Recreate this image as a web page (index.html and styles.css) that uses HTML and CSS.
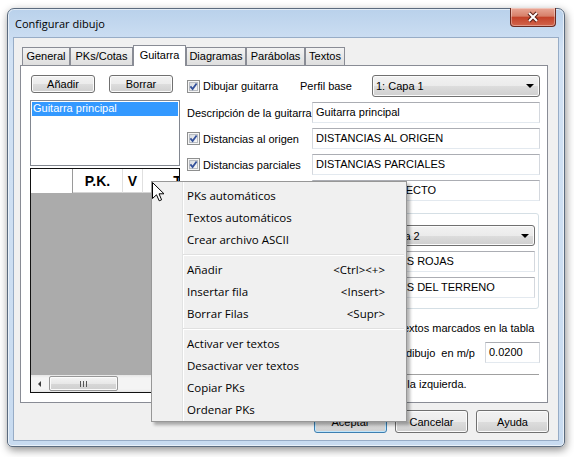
FILE: index.html
```html
<!DOCTYPE html>
<html lang="es">
<head>
    <meta charset="UTF-8">
    <title>Configurar dibujo</title>
    <link rel="stylesheet" href="styles.css">
</head>
<body>
    <svg class="defs" width="0" height="0">
        <defs>
            <linearGradient id="chkFill" x1="0" y1="0" x2="1" y2="1">
                <stop offset="0" stop-color="#d4d8dd"/>
                <stop offset="1" stop-color="#fbfbfb"/>
            </linearGradient>
            <symbol id="checked" viewBox="0 0 13 13">
                <rect x="0.5" y="0.5" width="12" height="12" fill="#f5f5f5" stroke="#8e8f8f"/>
                <rect x="2.5" y="2.5" width="8" height="8" fill="url(#chkFill)" stroke="#b8bcc2"/>
                <path d="M3.4 6.4 L5.6 9 L9.6 3.4" fill="none" stroke="#33509a" stroke-width="1.8"/>
            </symbol>
        </defs>
    </svg>

    <div class="window">
        <div class="titlebar">
            <span class="title">Configurar dibujo</span>
            <span class="close-btn">
                <svg width="14" height="12" viewBox="0 0 14 12">
                    <path d="M3 2 L11 10 M11 2 L3 10" stroke="#5a2018" stroke-width="4"/>
                    <path d="M3 2 L11 10 M11 2 L3 10" stroke="#fff" stroke-width="2"/>
                </svg>
            </span>
        </div>

        <div class="client">
            <div class="tabs">
                <div class="tab tab-general">General</div>
                <div class="tab tab-pks">PKs/Cotas</div>
                <div class="tab tab-guitarra active">Guitarra</div>
                <div class="tab tab-diagramas">Diagramas</div>
                <div class="tab tab-parabolas">Parábolas</div>
                <div class="tab tab-textos">Textos</div>
            </div>

            <div class="panel">
                <div class="left-col">
                    <div class="btn-row">
                        <button class="btn btn-add">Añadir</button>
                        <button class="btn btn-del">Borrar</button>
                    </div>
                    <div class="listbox">
                        <div class="list-item selected">Guitarra principal</div>
                    </div>
                    <div class="grid">
                        <div class="grid-head">
                            <div class="corner"></div>
                            <div class="hcell col-pk">P.K.</div>
                            <div class="hcell col-v">V</div>
                            <div class="hcell col-t">T</div>
                        </div>
                        <div class="grid-body"></div>
                        <div class="hscroll">
                            <span class="sb-arrow"><span class="tri-left"></span></span>
                            <span class="sb-thumb"><span class="grip"></span></span>
                        </div>
                    </div>
                </div>

                <div class="right-col">
                    <div class="row first">
                        <svg class="chk"><use href="#checked"/></svg>
                        <span>Dibujar guitarra</span>
                        <span class="perfil-label">Perfil base</span>
                        <div class="combo combo-base"><span>1: Capa 1</span><span class="arrow"></span></div>
                    </div>
                    <div class="row">
                        <span class="plain-label">Descripción de la guitarra</span>
                        <div class="field">Guitarra principal</div>
                    </div>
                    <div class="row">
                        <svg class="chk"><use href="#checked"/></svg>
                        <span>Distancias al origen</span>
                        <div class="field">DISTANCIAS AL ORIGEN</div>
                    </div>
                    <div class="row">
                        <svg class="chk"><use href="#checked"/></svg>
                        <span>Distancias parciales</span>
                        <div class="field">DISTANCIAS PARCIALES</div>
                    </div>
                    <div class="row">
                        <svg class="chk"><use href="#checked"/></svg>
                        <span>Cotas de proyecto</span>
                        <div class="field">COTAS DE PROYECTO</div>
                    </div>

                    <div class="group">
                        <div class="g-row">
                            <span>Perfil de comparación</span>
                            <div class="combo combo-group"><span>2: Capa 2</span><span class="arrow"></span></div>
                        </div>
                        <div class="g-row">
                            <svg class="chk"><use href="#checked"/></svg>
                            <span>Cotas rojas</span>
                            <div class="field field-group">COTAS ROJAS</div>
                        </div>
                        <div class="g-row">
                            <svg class="chk"><use href="#checked"/></svg>
                            <span>Cotas del terreno</span>
                            <div class="field field-group">COTAS DEL TERRENO</div>
                        </div>
                    </div>

                    <div class="row row-text">
                        <svg class="chk"><use href="#checked"/></svg>
                        <span>Mostrar en esta guitarra únicamente los textos marcados en la tabla</span>
                    </div>
                    <div class="row row-scale">
                        <span class="scale-label">Escala horizontal del dibujo&nbsp; en m/p</span>
                        <div class="field field-scale">0.0200</div>
                    </div>
                    <div class="separator"></div>
                    <div class="note">Nota: los PKs de esta guitarra se alinearán a la izquierda.</div>
                </div>
            </div>

            <div class="btn-bar">
                <button class="btn btn-big default">Aceptar</button>
                <button class="btn btn-big">Cancelar</button>
                <button class="btn btn-big">Ayuda</button>
            </div>
        </div>
    </div>

    <div class="ctx-menu">
        <div class="mi">PKs automáticos</div>
        <div class="mi">Textos automáticos</div>
        <div class="mi">Crear archivo ASCII</div>
        <div class="msep"></div>
        <div class="mi">Añadir<span class="shortcut">&lt;Ctrl&gt;&lt;+&gt;</span></div>
        <div class="mi">Insertar fila<span class="shortcut">&lt;Insert&gt;</span></div>
        <div class="mi">Borrar Filas<span class="shortcut">&lt;Supr&gt;</span></div>
        <div class="msep"></div>
        <div class="mi">Activar ver textos</div>
        <div class="mi">Desactivar ver textos</div>
        <div class="mi">Copiar PKs</div>
        <div class="mi">Ordenar PKs</div>
    </div>

    <svg class="cursor" width="13" height="20" viewBox="0 0 13 20">
        <path d="M0.5 0.5 L0.5 16.5 L4.5 12.8 L7.2 18.8 L9.6 17.8 L7 11.8 L12 11.8 Z" fill="#fff" stroke="#000" stroke-linejoin="round"/>
    </svg>
</body>
</html>
```

FILE: styles.css
```css
* {
    box-sizing: border-box;
}
body {
    margin: 0;
    height: 457px;
    overflow: hidden;
    background-color: #fff;
    color: #000;
    font-family: "Liberation Sans", Arial, sans-serif;
    font-size: 11px;
    position: relative;
}
.defs {
    position: absolute;
}

/* window frame */
.window {
    margin: 8px 0 0 7px;
    width: 558px;
    height: 439px;
    border: 1px solid #5b6b7e;
    border-radius: 7px 7px 5px 5px;
    background: linear-gradient(#b9d1eb, #d2e2f4 40px, #c8dbf0 100%);
    box-shadow: 1px 3px 9px rgba(0, 0, 0, 0.45), inset 0 0 0 1px rgba(255, 255, 255, 0.6);
    padding: 0 5px 5px 5px;
    display: flex;
    flex-direction: column;
}
.titlebar {
    height: 28px;
    display: flex;
    align-items: center;
}
.title {
    font-family: "Open Sans", sans-serif;
    font-size: 11px;
    margin-left: 2px;
}
.close-btn {
    align-self: flex-start;
    margin: -1px 3px 0 auto;
    width: 46px;
    height: 19px;
    border: 1px solid #6b2a20;
    border-top: none;
    border-radius: 0 0 4px 4px;
    background: linear-gradient(#e9a897, #d7806a 45%, #c4432a 52%, #d2654c 100%);
    box-shadow: inset 0 0 0 1px rgba(255, 255, 255, 0.35);
    display: flex;
    align-items: center;
    justify-content: center;
}
.client {
    flex: 1;
    border: 1px solid #97acc6;
    background-color: #f0f0f0;
    padding: 7px 0 0 6px;
}

/* tabs */
.tabs {
    display: flex;
    align-items: flex-end;
    height: 20px;
    padding-left: 2px;
}
.tab {
    height: 18px;
    line-height: 17px;
    text-align: center;
    border: 1px solid #898c95;
    border-bottom: none;
    background: linear-gradient(#f3f3f3, #e8e8e8 50%, #dedede);
}
.tab.active {
    height: 21px;
    line-height: 18px;
    margin-bottom: -1px;
    background: #fff;
    position: relative;
    z-index: 1;
}
.tab-general { width: 48px; }
.tab-pks { width: 63px; }
.tab-guitarra { width: 53px; }
.tab-diagramas { width: 60px; }
.tab-parabolas { width: 59px; }
.tab-textos { width: 40px; }

.panel {
    width: 528px;
    height: 338px;
    border: 1px solid #898c95;
    background-color: #fff;
    padding: 9px 6px 0 9px;
    display: flex;
    gap: 6px;
}

/* buttons */
.btn {
    font: inherit;
    color: #000;
    padding: 0;
    border: 1px solid #707070;
    border-radius: 3px;
    background: linear-gradient(#f2f2f2, #ebebeb 50%, #dddddd 51%, #cfcfcf);
    box-shadow: inset 0 0 0 1px #fbfbfb;
}
.btn-row {
    display: flex;
    height: 18px;
}
.btn-add {
    width: 64px;
    margin-left: 1px;
}
.btn-del {
    width: 64px;
    margin-left: 14px;
}
.btn-bar {
    display: flex;
    justify-content: flex-end;
    gap: 8px;
    margin-top: 7px;
    padding-right: 9px;
}
.btn-big {
    width: 73px;
    height: 23px;
}
.btn-big.default {
    border-color: #3c7fb1;
    box-shadow: inset 0 0 0 1px #bfe5fb;
}

/* left column */
.left-col {
    width: 150px;
    display: flex;
    flex-direction: column;
}
.listbox {
    margin-top: 7px;
    height: 66px;
    border: 1px solid #828790;
    padding: 1px;
}
.list-item {
    height: 14px;
    line-height: 13px;
    padding-left: 1px;
}
.list-item.selected {
    background-color: #3399ff;
    color: #fff;
}
.grid {
    margin-top: 2px;
    height: 225px;
    border: 1px solid #111;
    display: flex;
    flex-direction: column;
    overflow: hidden;
}
.grid-head {
    display: flex;
    height: 24px;
    flex-shrink: 0;
    background-color: #fff;
}
.corner {
    width: 42px;
    flex-shrink: 0;
    border-right: 1px solid #9a9a9a;
}
.hcell {
    flex-shrink: 0;
    border-right: 1px solid #e0e0e0;
    border-bottom: 1px solid #d4d4d4;
    font-size: 14px;
    font-weight: bold;
    text-align: center;
    padding-top: 4px;
}
.col-pk { width: 50px; }
.col-v { width: 20px; }
.col-t { width: 70px; }
.grid-body {
    flex: 1;
    background-color: #ababab;
}
.hscroll {
    height: 17px;
    flex-shrink: 0;
    display: flex;
    align-items: center;
    background: linear-gradient(#e6e6e6, #f4f4f4 3px, #f4f4f4 14px, #e6e6e6);
}
.sb-arrow {
    width: 17px;
    display: flex;
    justify-content: center;
}
.tri-left {
    width: 0;
    height: 0;
    border-top: 3px solid transparent;
    border-bottom: 3px solid transparent;
    border-right: 3px solid #3a3a3a;
}
.sb-thumb {
    margin-left: 1px;
    width: 69px;
    height: 15px;
    border: 1px solid #979797;
    border-radius: 2px;
    background: linear-gradient(#f4f4f4, #e8e8e8 50%, #d8d8d8 51%, #cfcfcf);
    box-shadow: inset 0 0 0 1px #fafafa;
    display: flex;
    align-items: center;
    justify-content: center;
}
.grip {
    width: 7px;
    height: 6px;
    background: linear-gradient(to right, #555 1px, transparent 1px);
    background-size: 3px 100%;
}

/* right column */
.right-col {
    width: 354px;
    display: flex;
    flex-direction: column;
}
.row {
    display: flex;
    align-items: center;
    height: 21px;
    margin-top: 5px;
    white-space: nowrap;
}
.row.first {
    height: 22px;
    margin-top: 0;
}
.chk {
    width: 13px;
    height: 13px;
    flex-shrink: 0;
    margin: 0 3px 0 1px;
}
.plain-label {
    margin-left: 1px;
}
.perfil-label {
    margin: 0 20px 0 auto;
}
.field {
    margin-left: auto;
    width: 228px;
    height: 21px;
    line-height: 19px;
    padding: 0 3px;
    border: 1px solid;
    border-color: #abadb3 #d4d8de #e3e9ef #d4d8de;
    background-color: #fff;
    white-space: nowrap;
    overflow: hidden;
}
.combo {
    display: flex;
    align-items: center;
    height: 22px;
    padding-left: 3px;
    border: 1px solid #707070;
    border-radius: 3px;
    background: linear-gradient(#f2f2f2, #ebebeb 50%, #dddddd 51%, #cfcfcf);
    box-shadow: inset 0 0 0 1px #fbfbfb;
}
.combo-base {
    width: 168px;
}
.arrow {
    margin: 0 5px 0 auto;
    width: 0;
    height: 0;
    border-left: 4px solid transparent;
    border-right: 4px solid transparent;
    border-top: 4px solid #000;
}
.group {
    margin-top: 12px;
    width: 353px;
    height: 96px;
    border: 1px solid #d5dfe5;
    border-radius: 3px;
    box-shadow: inset 1px 1px 0 #fff;
    padding: 11px 3px 0 8px;
}
.g-row {
    display: flex;
    align-items: center;
    height: 21px;
    margin-top: 5px;
    white-space: nowrap;
}
.g-row:first-child {
    margin-top: 0;
}
.combo-group {
    margin-left: auto;
    width: 164px;
    height: 21px;
    padding-left: 0;
}
.field-group {
    width: 162px;
    height: 21px;
}
.row-text {
    margin-top: 10px;
    height: 17px;
}
.row-scale {
    margin-top: 6px;
}
.scale-label {
    margin: 0 10px 0 auto;
}
.field-scale {
    margin-left: 0;
    width: 55px;
}
.separator {
    margin-top: 11px;
    width: 353px;
    border-top: 1px solid #a0a0a0;
    border-bottom: 1px solid #fff;
}
.note {
    margin-top: 1px;
    height: 14px;
    line-height: 14px;
    white-space: nowrap;
}

/* context menu */
.ctx-menu {
    position: absolute;
    left: 151px;
    top: 181px;
    width: 256px;
    padding: 2px 2px 1px;
    border: 1px solid #979797;
    background-color: #f0f0f0;
    background-image: linear-gradient(to right, transparent 30px, #e2e3e3 30px, #e2e3e3 31px, #fff 31px, #fff 32px, transparent 32px);
    box-shadow: 3px 3px 3px rgba(0, 0, 0, 0.3);
    font-family: "Open Sans", sans-serif;
    font-size: 11.5px;
    z-index: 5;
}
.mi {
    display: flex;
    align-items: center;
    height: 22px;
    padding: 0 19px 0 33px;
    white-space: nowrap;
}
.shortcut {
    margin-left: auto;
}
.msep {
    height: 2px;
    margin: 4px 0 2px 29px;
    border-top: 1px solid #e0e0e0;
    border-bottom: 1px solid #fff;
}
.cursor {
    position: absolute;
    left: 152px;
    top: 182px;
    z-index: 6;
}
```
